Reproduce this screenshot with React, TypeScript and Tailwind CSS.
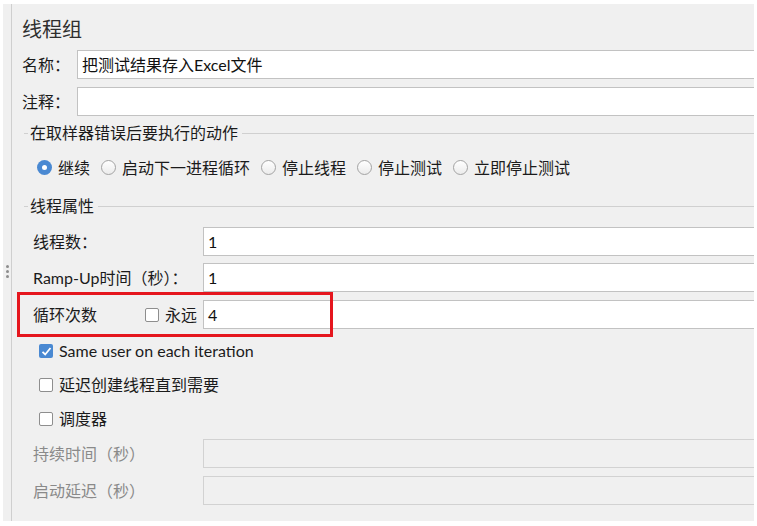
import React from "react"

const font = { fontFamily: 'Lato, "Noto Sans CJK SC", sans-serif' }

function Field({ value, disabled }: { value?: string; disabled?: boolean }) {
    return (
        <div
            className={
                "flex-1 h-[29px] border border-r-0 flex items-center pl-[4px] text-[16px] leading-none " +
                (disabled ? "bg-[#f0f0f0] border-[#d2d2d2]" : "bg-white border-[#c2c2c2] text-[#111]")
            }
        >
            {value}
        </div>
    )
}

function Legend({ title }: { title: string }) {
    return (
        <div className="flex items-center h-[16px] ml-[2px]">
            <div className="w-[4px] h-px bg-[#d0d0d0]" />
            <span className="px-[2px] text-[16px] leading-none text-[#1b1b1b]">{title}</span>
            <div className="flex-1 h-px bg-[#d0d0d0] ml-[2px]" />
        </div>
    )
}

function Radio({ label, checked }: { label: string; checked?: boolean }) {
    return (
        <div className="flex items-center">
            {checked ? (
                <div className="w-[15px] h-[15px] rounded-full bg-[#4a89d2] flex items-center justify-center">
                    <div className="w-[5px] h-[5px] rounded-full bg-white" />
                </div>
            ) : (
                <div className="w-[15px] h-[15px] rounded-full border border-[#a3a3a3] bg-gradient-to-b from-white to-[#ebebeb]" />
            )}
            <span className="ml-[6px] text-[16px] leading-none text-[#1b1b1b]">{label}</span>
        </div>
    )
}

function Check({ label, checked }: { label: string; checked?: boolean }) {
    return (
        <div className="flex items-center">
            {checked ? (
                <div className="w-[14px] h-[14px] rounded-[2px] bg-[#4a89d2] flex items-center justify-center">
                    <svg width="11" height="11" viewBox="0 0 11 11">
                        <path d="M1.5 5.8 L4.2 8.5 L9.5 2" fill="none" stroke="white" strokeWidth="1.8" />
                    </svg>
                </div>
            ) : (
                <div className="w-[14px] h-[14px] rounded-[2px] border border-[#8e8e8e] bg-white" />
            )}
            <span className="ml-[6px] text-[16px] leading-none text-[#1b1b1b]">{label}</span>
        </div>
    )
}

export default function App() {
    return (
        <div className="relative w-[757px] h-[526px] bg-white pt-[4px] pl-[3px] pr-[3px] pb-[5px]" style={font}>
            <div className="flex h-full bg-[#f0f0f0] overflow-hidden">
                {/* split pane grip */}
                <div className="w-[8px] flex flex-col items-center pt-[261px] gap-[2px]">
                    <div className="w-[3px] h-[3px] rounded-full bg-[#8d8d8d]" />
                    <div className="w-[3px] h-[3px] rounded-full bg-[#8d8d8d]" />
                    <div className="w-[3px] h-[3px] rounded-full bg-[#8d8d8d]" />
                </div>
                <div className="w-px bg-[#cfcfcf]" />
                <div className="flex-1 flex flex-col pl-[10px]">
                    <div className="mt-[11px] h-[28px] flex items-center text-[20px] leading-none text-[#2e2e2e]">
                        线程组
                    </div>

                    <div className="mt-[7px] flex items-center">
                        <span className="w-[55px] text-[16px] leading-none text-[#1b1b1b]">名称：</span>
                        <Field value="把测试结果存入Excel文件" />
                    </div>
                    <div className="mt-[8px] flex items-center">
                        <span className="w-[55px] text-[16px] leading-none text-[#1b1b1b]">注释：</span>
                        <Field />
                    </div>

                    <div className="mt-[9px]">
                        <Legend title="在取样器错误后要执行的动作" />
                    </div>
                    <div className="mt-[16px] h-[21px] flex items-center gap-[11px] pl-[15px]">
                        <Radio label="继续" checked />
                        <Radio label="启动下一进程循环" />
                        <Radio label="停止线程" />
                        <Radio label="停止测试" />
                        <Radio label="立即停止测试" />
                    </div>

                    <div className="mt-[20px]">
                        <Legend title="线程属性" />
                    </div>
                    <div className="pl-[11px] flex flex-col">
                        <div className="mt-[13px] flex items-center">
                            <span className="w-[170px] text-[16px] leading-none text-[#1b1b1b]">线程数：</span>
                            <Field value="1" />
                        </div>
                        <div className="mt-[7px] flex items-center">
                            <span className="w-[170px] text-[16px] leading-none text-[#1b1b1b]">Ramp-Up时间（秒）：</span>
                            <Field value="1" />
                        </div>
                        <div className="mt-[8px] flex items-center">
                            <span className="w-[112px] text-[16px] leading-none text-[#1b1b1b]">循环次数</span>
                            <div className="w-[58px]">
                                <Check label="永远" />
                            </div>
                            <Field value="4" />
                        </div>
                        <div className="mt-[12px] h-[20px] flex items-center pl-[6px]">
                            <Check label="Same user on each iteration" checked />
                        </div>
                        <div className="mt-[14px] h-[20px] flex items-center pl-[6px]">
                            <Check label="延迟创建线程直到需要" />
                        </div>
                        <div className="mt-[14px] h-[20px] flex items-center pl-[6px]">
                            <Check label="调度器" />
                        </div>
                        <div className="mt-[10px] flex items-center">
                            <span className="w-[170px] text-[16px] leading-none text-[#8a8a8a]">持续时间（秒）</span>
                            <Field disabled />
                        </div>
                        <div className="mt-[8px] flex items-center">
                            <span className="w-[170px] text-[16px] leading-none text-[#8a8a8a]">启动延迟（秒）</span>
                            <Field disabled />
                        </div>
                    </div>
                </div>
            </div>

            {/* annotation box */}
            <div className="absolute left-[17px] top-[292px] w-[316px] h-[45px] border-[3px] border-[#e5161e]" />
        </div>
    )
}
